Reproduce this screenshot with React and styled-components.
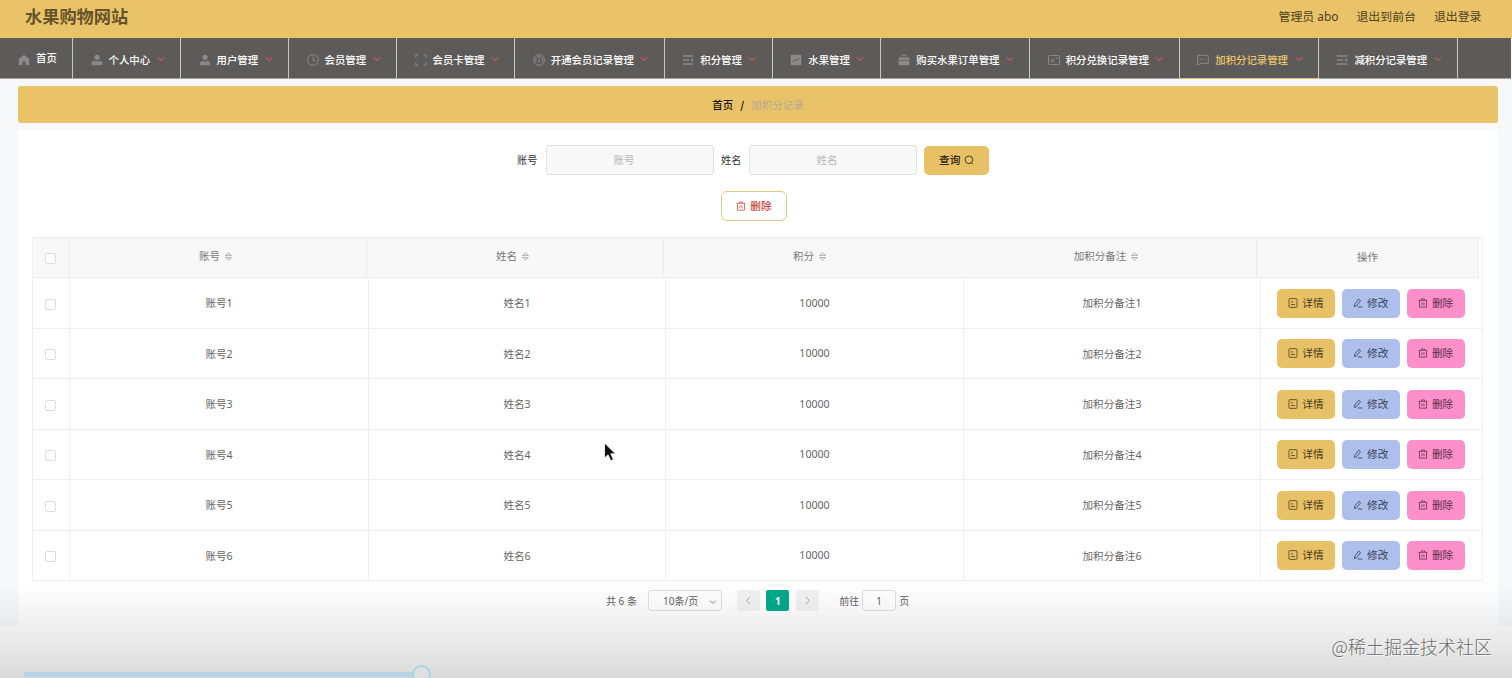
import React from 'react';
import styled, { createGlobalStyle, css } from 'styled-components';

const GlobalStyle = createGlobalStyle`
  * { box-sizing: border-box; }
  body {
    margin: 0;
    background: #fff;
    font-family: 'Noto Sans', 'Noto Sans CJK SC', sans-serif;
    font-size: 10.5px;
    color: #666;
    overflow: hidden;
  }
  button, input { font-family: inherit; font-size: inherit; }
`;

const Screen = styled.div`
  position: relative;
  height: 678px;
  overflow: hidden;
`;

const Page = styled.div`
  height: 626px;
  background: #f6f8fa;
`;

const Header = styled.header`
  display: flex;
  align-items: center;
  justify-content: space-between;
  height: 38px;
  padding: 0 30.5px 7px 25px;
  background: #eac369;
`;

const SiteTitle = styled.h1`
  margin: 0;
  font-size: 17.2px;
  line-height: 24px;
  font-weight: 700;
  font-family: 'Noto Sans CJK SC', sans-serif;
  color: #65532a;
`;

const UserLinks = styled.div`
  display: flex;
  gap: 18px;
  font-size: 11.9px;
  line-height: 18px;
  color: #4b3e20;
`;

const Nav = styled.nav`
  display: flex;
  height: 41px;
  margin-right: 1px;
  background: #5d5b59;
  border-bottom: 1px solid #a5a3a0;
`;

const NavItem = styled.a`
  display: flex;
  align-items: center;
  flex: none;
  width: ${p => p.$width}px;
  height: 41px;
  padding: ${p => (p.$home ? '0 0 0 18px' : '3px 0 0 17.5px')};
  border-right: 1px solid #c9c7c3;
  border-bottom: 1px solid ${p => (p.$active ? '#eac369' : '#a5a3a0')};
  color: ${p => (p.$active ? '#eac369' : '#fff')};
  font-size: 10.4px;
  line-height: 16px;
  font-weight: 500;
  white-space: nowrap;

  svg:first-child { width: 12px; height: 12px; color: #8b8a89; margin-top: ${p => (p.$home ? 3 : 0)}px; }
  span { margin-left: 6px; font-family: 'Noto Sans CJK SC', sans-serif; }
  svg:last-child:not(:first-child) { margin: -2px 0 0 6.5px; color: #d05a62; }
`;

const Breadcrumb = styled.div`
  display: flex;
  align-items: center;
  justify-content: center;
  gap: 6px;
  height: 37px;
  margin: 7px 14px 7px 18px;
  border-radius: 3px;
  background: #eac369;
  color: #17130a;
  font-size: 10.5px;
  font-weight: 500;
  font-family: 'Noto Sans CJK SC', sans-serif;
  b { font-weight: 700; width: 6px; text-align: center; }
  span:last-child { font-weight: 400; color: #b3a996; }
`;

const Panel = styled.main`
  height: 496px;
  margin: 0 14px 0 18px;
  padding: 15px 15px 0 14px;
  background: #fff;
`;

const SearchRow = styled.form`
  display: flex;
  align-items: center;
  height: 30px;
  padding-left: 485px;
  color: #333;
`;

const Label = styled.label`
  width: ${p => p.$width}px;
  padding: 0 0 2px ${p => p.$indent || 0}px;
  font-size: 10.2px;
`;

const Field = styled.input`
  width: 168px;
  height: 30px;
  padding: 0 12px 1px 0;
  border: 1px solid #dfe2dd;
  border-radius: 3px;
  background: #f8f8f8;
  text-align: center;
  outline: none;
  &::placeholder { color: #b5b5b5; opacity: 1; }
`;

const buttonColours = {
  gold: css`background: #e8c167; color: #433717;`,
  blue: css`background: #afbfeb; color: #39405a;`,
  pink: css`background: #fd90ca; color: #592f49;`,
  search: css`background: #e8c167; color: #2b2410; font-weight: 500; margin-left: 7.3px;`,
  outline: css`background: #fff; color: #cf3f3b; border: 1px solid #dfc987; font-weight: 500;`,
};

const Button = styled.button`
  display: flex;
  align-items: center;
  justify-content: center;
  gap: 4px;
  width: ${p => p.$width || 58}px;
  height: ${p => p.$height || 29}px;
  padding: 0 0 1px;
  border: 0;
  border-radius: ${p => p.$radius || 5}px;
  font-size: 10.7px;
  line-height: 16px;
  ${p => buttonColours[p.$kind]}
`;

const BulkRow = styled.div`
  display: flex;
  margin-top: 16px;
  padding-left: 689px;
`;

const Table = styled.div`
  width: 1451px;
  height: 344px;
  margin-top: 16px;
  border: 1px solid #eeefef;
`;

const HeadRow = styled.div`
  display: grid;
  grid-template-columns: 37px 297px 297px 297px 296px 222px;
  width: 1446px;
  height: 40px;
  background: #f8f8f8;
  border-bottom: 1px solid #ececec;
  color: #777;
`;

const HeadCell = styled.div`
  display: flex;
  align-items: center;
  justify-content: center;
  gap: 4px;
  padding-bottom: ${p => (p.$sortable ? 5 : 2)}px;
  padding-right: ${p => (p.$sortable ? 4 : 0)}px;
  border-right: 1px solid ${p => (p.$open ? 'transparent' : '#ececec')};
  svg { margin-top: 2px; }
`;

const BodyRow = styled.div`
  display: grid;
  grid-template-columns: 37px 299px 297px 298px 297px 1fr;
  height: 50.5px;
  border-bottom: 1px solid #efefef;
`;

const Cell = styled.div`
  display: flex;
  align-items: center;
  justify-content: center;
  border-right: 1px solid #efefef;
  font-size: 10.6px;
  &:last-child { border-right: 0; }
`;

const Actions = styled(Cell)`
  justify-content: flex-start;
  gap: 6.8px;
  padding: 1px 0 0 16px;
`;

const Check = styled.span`
  width: 11px;
  height: 11px;
  margin: 3px 2px 0 0;
  border: 1px solid #dcdcdc;
  border-radius: 2px;
  background: #fff;
`;

const Pagination = styled.div`
  display: flex;
  align-items: center;
  height: 21px;
  margin: 9px 0 0 574px;
  font-size: 10px;
  line-height: 14px;
  color: #606266;
`;

const Total = styled.span`
  width: 42px;
  white-space: nowrap;
`;

const SizeSelect = styled.div`
  display: flex;
  align-items: center;
  justify-content: space-between;
  width: 74px;
  height: 21px;
  padding: 1px 4px 0 14px;
  margin-right: 15px;
  border: 1px solid #dcdee2;
  border-radius: 3px;
  background: #fff;
  svg { color: #a9adb5; margin-top: 1px; }
`;

const PageButton = styled.span`
  display: flex;
  align-items: center;
  justify-content: center;
  width: 23px;
  height: 21px;
  margin-right: 6.3px;
  border-radius: 2px;
  background: ${p => (p.$current ? '#05a98d' : '#f2f2f3')};
  color: ${p => (p.$current ? '#fff' : '#9fa2a8')};
  font-weight: 700;
`;

const Jump = styled.div`
  display: flex;
  align-items: center;
  gap: 3px;
  margin-left: 14.3px;
`;

const JumpInput = styled.input`
  width: 34px;
  height: 21px;
  padding: 0;
  border: 1px solid #dcdee2;
  border-radius: 3px;
  background: #fff;
  color: #606266;
  text-align: center;
`;

const Shade = styled.div`
  position: absolute;
  inset: 580px 0 0 0;
  background: linear-gradient(rgba(0, 0, 0, 0), rgba(0, 0, 0, 0.02) 18%, rgba(0, 0, 0, 0.075) 55%, rgba(0, 0, 0, 0.145));
  pointer-events: none;
`;

const Track = styled.div`
  position: absolute;
  left: 24px;
  top: 672px;
  width: 389px;
  height: 5px;
  background: #b5d3e5;
`;

const Knob = styled.div`
  position: absolute;
  left: 412px;
  top: 665px;
  width: 19px;
  height: 19px;
  border: 2px solid #add3e3;
  border-radius: 50%;
  background: #dedfdf;
`;

const Watermark = styled.div`
  position: absolute;
  right: 20px;
  top: 633px;
  font-family: 'Noto Sans CJK SC', sans-serif;
  font-size: 18px;
  line-height: 26px;
  font-weight: 300;
  color: #6b6b6b;
  text-shadow: 1px 1px 0 rgba(255, 255, 255, 0.8);
  white-space: nowrap;
`;

const Pointer = styled.svg`
  position: absolute;
  left: 603px;
  top: 442px;
`;

const line = { fill: 'none', stroke: 'currentColor', strokeWidth: 1 };

const shapes = {
  home: <path fill="currentColor" d="M6 .8 11.2 5v6H7.6V7.5H4.4V11H.8V5z" />,
  person: <g fill="currentColor"><circle cx="6" cy="3.3" r="2.6" /><rect x=".8" y="7.3" width="10.4" height="4" rx="1.3" /></g>,
  user: <g fill="currentColor"><circle cx="6" cy="3.3" r="2.6" /><path d="M.7 11.3c0-3 1.7-4.6 3.4-4.6L6 8.4l1.9-1.7c1.7 0 3.4 1.6 3.4 4.6z" /></g>,
  clock: <g {...line}><circle cx="6" cy="6" r="5.4" /><path d="M6 2.8v3.6h2.8" /></g>,
  frame: <path {...line} d="M.8 3.6V.8h2.8M8.4.8h2.8v2.8M11.2 8.4v2.8H8.4M3.6 11.2H.8V8.4" />,
  gauge: <g {...line}><circle cx="6" cy="6" r="5.4" /><path d="M3.2 8.2a3.5 3.5 0 1 1 5.6 0M5.7 8.5l1-4" /></g>,
  list: <g><path {...line} strokeWidth="1.3" d="M.8 2h10.4M.8 6h6.4M.8 10h10.4" /><path fill="currentColor" d="M11.2 4v4L8.4 6z" /></g>,
  trend: <g><rect x=".7" y=".7" width="10.6" height="10.6" rx="1" fill="currentColor" /><path d="m2.5 8 2.4-2.4 1.6 1.4 3-3.4" fill="none" stroke="#5d5b59" /></g>,
  bag: <g fill="currentColor"><path d="M.6 3.5h10.8v2.7H.6zM.6 7h10.8v4.3H.6z" /><path {...line} d="M3.8 3.2V1.3h4.4v1.9" /></g>,
  card: <g {...line}><rect x=".5" y="1.5" width="11" height="9" rx=".8" /><circle cx="4.6" cy="6.6" r="1.3" /><path d="M7.8 4.4h1.8" /></g>,
  chat: <g {...line}><path d="M.7 1.3h10.6v8H4.1L.7 11z" /><path d="M3 5.4h1.2M5.4 5.4h1.2M7.8 5.4H9" /></g>,
  doc: <g {...line} strokeWidth=".9"><rect x="1.2" y=".8" width="9.6" height="10.4" rx=".8" /><path d="M3.6 4.7h2.6M3.6 7.8h4.8" /></g>,
  edit: <path {...line} d="M2.2 7.2 6.9 1.4l2.2 1.8-4.6 5.9-2.8 1.1zM5.8 10.8h5.4" />,
  trash: <g {...line} strokeWidth=".9"><path d="M.6 2.8h10.8M4.2 2.6V1.1h3.6v1.5M1.8 3v8h8.4V3M4.8 5.2v3.6M7.2 5.2v3.6" /></g>,
  search: <g {...line}><circle cx="5.9" cy="5.7" r="4.6" /><path d="m8.8 9 1.8 1.9" /></g>,
  down: <path {...line} strokeWidth="1.6" d="m1.2 3.8 4.8 4.2 4.8-4.2" />,
  left: <path {...line} strokeWidth="1.3" d="M8.2 1.2 3.4 6l4.8 4.8" />,
  right: <path {...line} strokeWidth="1.3" d="M3.8 1.2 8.6 6l-4.8 4.8" />,
  sort: <g fill="none" stroke="#a3a3a3" strokeWidth="1.1"><path d="M2 4.6 6 1.2l4 3.4zM2 7.4l4 3.4 4-3.4z" /></g>,
};

const Icon = ({ name, size = 12 }) => (
  <svg width={size} height={size} viewBox="0 0 12 12" aria-hidden="true">{shapes[name]}</svg>
);

const menu = [
  ['个人中心', 'person', 108],
  ['用户管理', 'user', 108],
  ['会员管理', 'clock', 108],
  ['会员卡管理', 'frame', 118.3],
  ['开通会员记录管理', 'gauge', 149.5],
  ['积分管理', 'list', 108],
  ['水果管理', 'trend', 108],
  ['购买水果订单管理', 'bag', 149.4],
  ['积分兑换记录管理', 'card', 149.6],
  ['加积分记录管理', 'chat', 139.1],
  ['减积分记录管理', 'list', 139],
];

const columns = ['账号', '姓名', '积分', '加积分备注'];
const rows = [1, 2, 3, 4, 5, 6];

export default function App() {
  return (
    <Screen>
      <GlobalStyle />
      <Page>
        <Header>
          <SiteTitle>水果购物网站</SiteTitle>
          <UserLinks>
            <span>管理员 abo</span>
            <span>退出到前台</span>
            <span>退出登录</span>
          </UserLinks>
        </Header>
        <Nav>
          <NavItem $width={73} $home><Icon name="home" /><span>首页</span></NavItem>
          {menu.map(([text, icon, width]) => (
            <NavItem key={text} $width={width} $active={text === '加积分记录管理'}>
              <Icon name={icon} />
              <span>{text}</span>
              <Icon name="down" size={8} />
            </NavItem>
          ))}
        </Nav>
        <Breadcrumb><span>首页</span><b>/</b><span>加积分记录</span></Breadcrumb>
        <Panel>
          <SearchRow>
            <Label $width={29}>账号</Label>
            <Field placeholder="账号" />
            <Label $width={35} $indent={7}>姓名</Label>
            <Field placeholder="姓名" />
            <Button type="button" $kind="search" $width={65}>查询<Icon name="search" size={10} /></Button>
          </SearchRow>
          <BulkRow>
            <Button $kind="outline" $width={66} $height={30} $radius={6}><Icon name="trash" size={10} />删除</Button>
          </BulkRow>
          <Table>
            <HeadRow>
              <HeadCell><Check /></HeadCell>
              {columns.map((name, i) => (
                <HeadCell key={name} $sortable $open={i === 2}>{name}<Icon name="sort" size={9} /></HeadCell>
              ))}
              <HeadCell>操作</HeadCell>
            </HeadRow>
            {rows.map(n => (
              <BodyRow key={n}>
                <Cell><Check /></Cell>
                <Cell>账号{n}</Cell>
                <Cell>姓名{n}</Cell>
                <Cell>10000</Cell>
                <Cell>加积分备注{n}</Cell>
                <Actions>
                  <Button $kind="gold"><Icon name="doc" size={10} />详情</Button>
                  <Button $kind="blue"><Icon name="edit" size={10} />修改</Button>
                  <Button $kind="pink"><Icon name="trash" size={10} />删除</Button>
                </Actions>
              </BodyRow>
            ))}
          </Table>
          <Pagination>
            <Total>共 6 条</Total>
            <SizeSelect>10条/页<Icon name="down" size={8} /></SizeSelect>
            <PageButton><Icon name="left" size={9} /></PageButton>
            <PageButton $current>1</PageButton>
            <PageButton><Icon name="right" size={9} /></PageButton>
            <Jump>前往<JumpInput defaultValue="1" />页</Jump>
          </Pagination>
        </Panel>
      </Page>
      <Shade />
      <Track />
      <Knob />
      <Watermark>@稀土掘金技术社区</Watermark>
      <Pointer width="14" height="21" viewBox="0 0 14 21">
        <path d="M1.5 1v15l3.6-3.2 2.6 6 2.7-1.2-2.6-5.8h4.7z" fill="#111" stroke="#fff" strokeWidth=".8" />
      </Pointer>
    </Screen>
  );
}
